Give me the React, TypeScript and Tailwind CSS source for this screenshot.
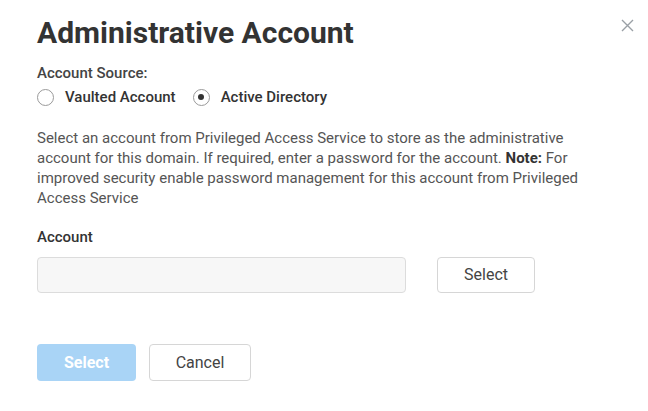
import { useState } from 'react';

const sources = ['Vaulted Account', 'Active Directory'];

function Radio({ checked }: { checked: boolean }) {
  return (
    <span className="flex h-[17px] w-[17px] items-center justify-center rounded-full border border-[#9a9a9a] bg-white">
      {checked && <span className="h-[6px] w-[6px] rounded-full bg-[#333]" />}
    </span>
  );
}

export default function App() {
  const [source, setSource] = useState('Active Directory');

  return (
    <div className="relative h-[411px] w-[648px] overflow-hidden bg-white pl-[37px] pt-[15px] font-['Roboto',sans-serif] text-[#333]">
      <button className="absolute right-[13px] top-[17px] flex h-[16px] w-[16px] items-center justify-center text-[#9aa0a6]">
        <svg width="13" height="13" viewBox="0 0 13 13" fill="none" stroke="currentColor" strokeWidth="1.4">
          <path d="M1 1L12 12M12 1L1 12" />
        </svg>
      </button>

      <h1 className="text-[30px] font-bold leading-[36px] text-[#333]">Administrative Account</h1>

      <div className="mt-[12px] text-[15px] font-medium leading-[20px] text-[#444]">Account Source:</div>

      <div className="mt-[4px] flex items-center text-[15px] font-medium leading-[20px] text-[#333]">
        {sources.map((s, i) => (
          <label
            key={s}
            onClick={() => setSource(s)}
            className={`flex cursor-pointer items-center gap-[11px] ${i > 0 ? 'ml-[17px]' : ''}`}
          >
            <Radio checked={source === s} />
            <span>{s}</span>
          </label>
        ))}
      </div>

      <p className="mt-[21px] w-[582px] text-[15px] leading-[20px] text-[#555]">
        Select an account from Privileged Access Service to store as the administrative account for this domain. If
        required, enter a password for the account. <span className="font-bold text-[#333]">Note:</span> For improved
        security enable password management for this account from Privileged Access Service
      </p>

      <div className="mt-[19px] text-[15px] font-medium leading-[20px] text-[#333]">Account</div>

      <div className="mt-[10px] flex items-center">
        <input
          readOnly
          className="h-[36px] w-[369px] rounded-[4px] border border-[#dcdcdc] bg-[#f7f7f7] px-3 text-[15px] outline-none"
        />
        <button className="ml-[31px] h-[36px] w-[98px] rounded-[4px] border border-[#d6d6d6] bg-white text-[16px] text-[#444]">
          Select
        </button>
      </div>

      <div className="mt-[51px] flex items-center gap-[13px]">
        <button className="h-[37px] w-[99px] rounded-[4px] bg-[#a9d4f6] text-[16px] font-bold text-white">Select</button>
        <button className="h-[37px] w-[102px] rounded-[4px] border border-[#d6d6d6] bg-white text-[16px] text-[#444]">
          Cancel
        </button>
      </div>
    </div>
  );
}
